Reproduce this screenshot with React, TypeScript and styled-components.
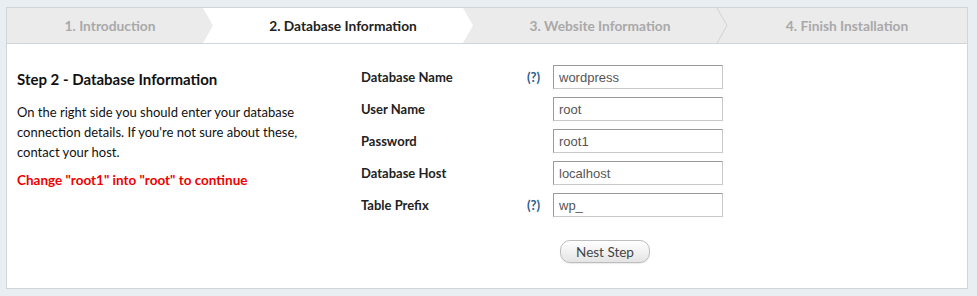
import styled, { createGlobalStyle } from 'styled-components'

const GlobalStyle = createGlobalStyle`
  html, body {
    margin: 0;
    padding: 0;
    background: #e8eef2;
  }
  body {
    font-family: Lato, 'Open Sans', 'Liberation Sans', sans-serif;
  }
`

const steps = [
  { label: '1. Introduction', width: 196 },
  { label: '2. Database Information', width: 260 },
  { label: '3. Website Information', width: 254 },
  { label: '4. Finish Installation', width: 0 },
]

const fields = [
  { label: 'Database Name', value: 'wordpress', help: true },
  { label: 'User Name', value: 'root', help: false },
  { label: 'Password', value: 'root1', help: false },
  { label: 'Database Host', value: 'localhost', help: false },
  { label: 'Table Prefix', value: 'wp_', help: true },
]

const ACTIVE = 1

export default function App() {
  return (
    <>
      <GlobalStyle />
      <Page>
        <Panel>
          <Tabs>
            {steps.map((s, i) => {
              const active = i === ACTIVE
              const last = i === steps.length - 1
              const bg = active ? '#ffffff' : '#ebebeb'
              // line between two grey tabs, none when touching the white one
              const line = !active && i + 1 !== ACTIVE ? '#cfd3d6' : 'none'
              return (
                <Tab
                  key={s.label}
                  $width={s.width}
                  $active={active}
                  $first={i === 0}
                  $last={last}
                  $layer={steps.length - i}
                >
                  {s.label}
                  {!last && (
                    <Arrow viewBox="0 0 10 35" preserveAspectRatio="none">
                      <polygon points="0,0 10,17.5 0,35" fill={bg} />
                      <polyline points="0,0 10,17.5 0,35" fill="none" stroke={line} strokeWidth="1" />
                    </Arrow>
                  )}
                </Tab>
              )
            })}
          </Tabs>

          <Body>
            <Intro>
              <Heading>Step 2 - Database Information</Heading>
              <Text>
                On the right side you should enter your database connection details. If you're not sure
                about these, contact your host.
              </Text>
              <Warning>Change "root1" into "root" to continue</Warning>
            </Intro>

            <Form>
              <Fields>
                {fields.map((f) => (
                  <Row key={f.label}>
                    <Label>{f.label}</Label>
                    <Help>{f.help ? '(?)' : ''}</Help>
                    <Input defaultValue={f.value} />
                  </Row>
                ))}
              </Fields>
              <Actions>
                <Button>Nest Step</Button>
              </Actions>
            </Form>
          </Body>
        </Panel>
      </Page>
    </>
  )
}

const Page = styled.div`
  width: 977px;
  height: 296px;
  padding: 7px 0 0 6px;
  box-sizing: border-box;
`

const Panel = styled.div`
  width: 962px;
  height: 282px;
  box-sizing: border-box;
  background: #ffffff;
  border: 1px solid #cfd6db;
  display: flex;
  flex-direction: column;
`

const Tabs = styled.div`
  display: flex;
  height: 35px;
  border-bottom: 1px solid #cfd6db;
  background: #ebebeb;
`

const Tab = styled.div<{ $width: number; $active: boolean; $first: boolean; $last: boolean; $layer: number }>`
  position: relative;
  ${(p) => (p.$width ? `width: ${p.$width}px;` : 'flex: 1;')}
  box-sizing: border-box;
  padding-left: ${(p) => (p.$first || p.$last ? 10 : 20)}px;
  display: flex;
  align-items: center;
  justify-content: center;
  background: ${(p) => (p.$active ? '#ffffff' : '#ebebeb')};
  color: ${(p) => (p.$active ? '#222222' : '#a9a9a9')};
  font-size: 13.75px;
  font-weight: 700;
  z-index: ${(p) => p.$layer};
`

const Arrow = styled.svg`
  position: absolute;
  top: 0;
  right: -10px;
  width: 10px;
  height: 35px;
  overflow: visible;
`

const Body = styled.div`
  flex: 1;
  display: flex;
  padding: 21px 0 0 10px;
`

const Intro = styled.div`
  width: 344px;
  padding-top: 5px;
`

const Heading = styled.h2`
  margin: 0 0 13px;
  font-size: 15px;
  font-weight: 700;
  color: #111;
  line-height: 19px;
`

const Text = styled.p`
  margin: 0;
  width: 300px;
  font-size: 13px;
  line-height: 20px;
  color: #111;
`

const Warning = styled.p`
  margin: 8px 0 0;
  font-size: 13.5px;
  font-weight: 700;
  line-height: 20px;
  color: #f00000;
`

const Form = styled.div`
  display: flex;
  flex-direction: column;
`

const Fields = styled.div`
  display: flex;
  flex-direction: column;
  gap: 8px;
`

const Row = styled.div`
  display: grid;
  grid-template-columns: 166px 26px 170px;
  align-items: center;
  height: 24px;
`

const Label = styled.span`
  font-size: 13px;
  font-weight: 700;
  color: #222;
`

const Help = styled.span`
  font-size: 13px;
  font-weight: 700;
  color: #2b5d8c;
`

const Input = styled.input`
  box-sizing: border-box;
  width: 170px;
  height: 24px;
  margin: 0;
  padding: 0 5px;
  border: 1px solid #c9c9c9;
  border-top-color: #9a9a9a;
  border-left-color: #9a9a9a;
  font-family: 'Liberation Sans', Arial, sans-serif;
  font-size: 13px;
  color: #555;
  outline: none;
`

const Actions = styled.div`
  padding: 23px 0 0 199px;
`

const Button = styled.button`
  width: 90px;
  height: 23px;
  border: 1px solid #bdbdbd;
  border-radius: 10px;
  background: linear-gradient(#ffffff, #e4e4e4);
  box-shadow: 0 1px 1px rgba(0, 0, 0, 0.08);
  font-family: Lato, 'Open Sans', sans-serif;
  font-size: 13.5px;
  color: #444;
  padding: 0;
  cursor: pointer;
`
